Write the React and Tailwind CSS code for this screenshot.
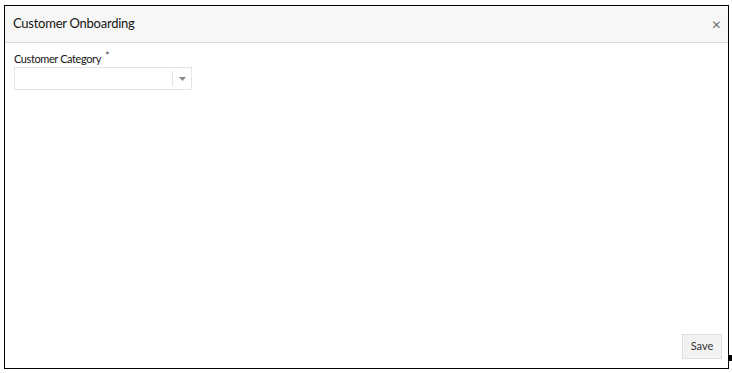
import React from 'react';

export default function App() {
  return (
    <div
      className="relative w-[732px] h-[373px] bg-white pt-[5px] pl-[4px]"
      style={{ fontFamily: 'Lato, "Noto Sans", sans-serif' }}
    >
      <div className="w-[725px] h-[364px] border border-black flex flex-col">
        {/* Header */}
        <div className="h-[37px] bg-[#f7f7f7] border-b border-[#dcdcdc] flex items-center justify-between pl-[8px] pr-[7px]">
          <h1 className="text-[13px] tracking-[-0.25px] text-[#161513]">Customer Onboarding</h1>
          <button className="text-[16px] leading-none text-[#6b6b6b]">×</button>
        </div>

        {/* Body */}
        <div className="flex-1 flex flex-col px-[9px] pt-[8px]">
          <label className="text-[11px] tracking-[-0.4px] text-[#161513] leading-[16px] flex items-start">
            Customer Category
            <span className="ml-[4px] text-[11px] leading-none text-[#555] relative top-[-1px]">*</span>
          </label>
          <div className="w-[178px] h-[23px] border border-[#e4e4e4] flex">
            <div className="flex-1" />
            <div className="w-[19px] border-l border-[#e4e4e4] my-[3px] flex items-center justify-center">
              <svg width="7" height="4" viewBox="0 0 7 4">
                <path d="M0 0 L7 0 L3.5 4 Z" fill="#888" />
              </svg>
            </div>
          </div>
        </div>

        {/* Footer */}
        <div className="flex justify-end pr-[6px] pb-[9px]">
          <button className="w-[40px] h-[25px] bg-[#f2f2f2] border border-[#dedede] text-[11px] text-[#333]">
            Save
          </button>
        </div>
      </div>
      <span className="absolute left-[729px] top-[355px] w-[3px] h-[6px] bg-black" />
    </div>
  );
}
